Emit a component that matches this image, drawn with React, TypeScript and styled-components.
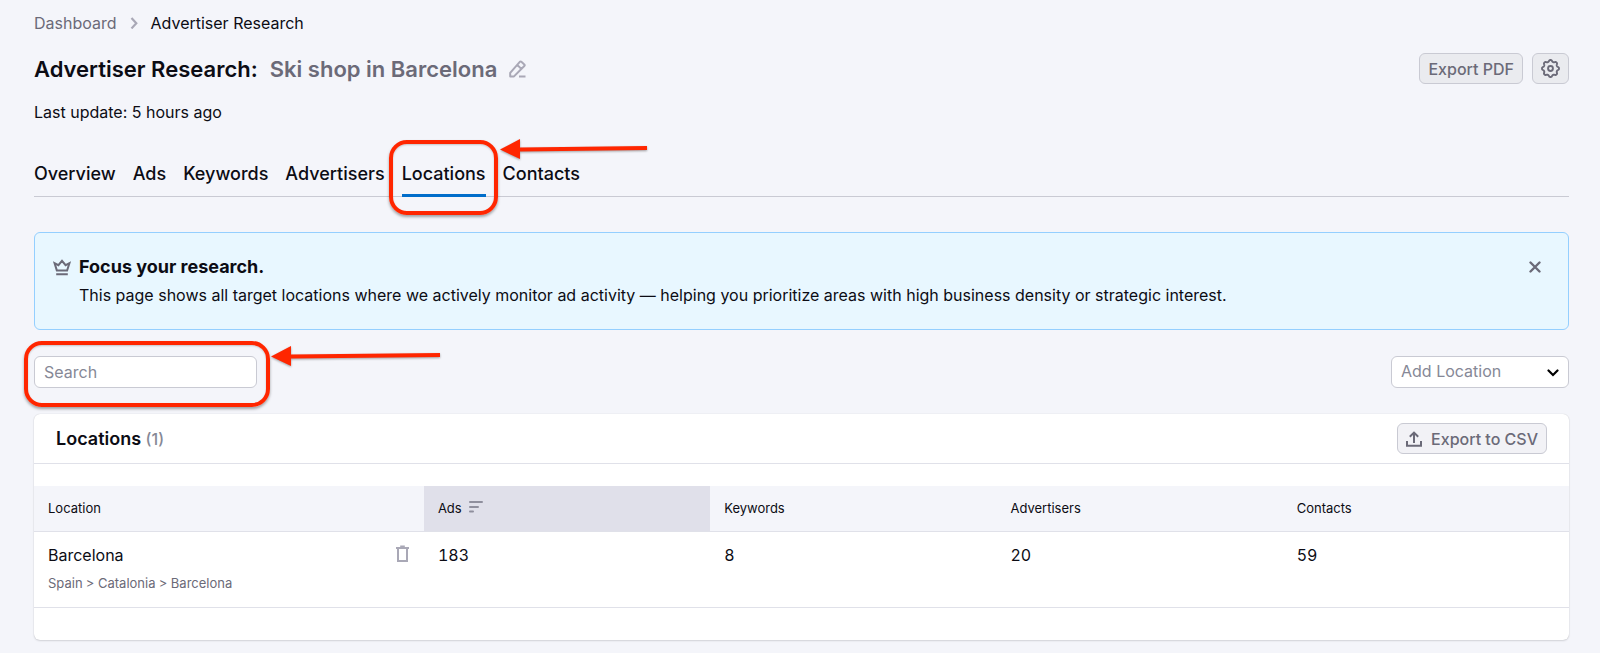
import React from "react";
import styled, { createGlobalStyle } from "styled-components";

const color = {
  page: "#f4f5fa",
  text: "#0c0c14",
  secondary: "#6b6a78",
  muted: "#a9a8b6",
  placeholder: "#868896",
  line: "#e0e1e9",
  control: "#c9cad3",
  accent: "#006dca",
  mark: "#ff2600",
};

const GlobalStyle = createGlobalStyle`
  *, *::before, *::after { box-sizing: border-box; }
  body {
    margin: 0;
    background: ${color.page};
    color: ${color.text};
    font-family: Inter, "Liberation Sans", sans-serif;
    font-size: 16px;
    line-height: 24px;
  }
  button, input, select { font: inherit; }
`;

const Page = styled.main`
  padding: 11px 31px 13px 34px;
`;

const Breadcrumbs = styled.nav`
  display: flex;
  align-items: center;
  gap: 13px;
`;

const Crumb = styled.a<{ $current?: boolean }>`
  color: ${(p) => (p.$current ? color.text : color.secondary)};
  text-decoration: none;
`;

const TitleRow = styled.header`
  display: flex;
  align-items: flex-start;
  justify-content: space-between;
  margin-top: 18px;
`;

const Title = styled.h1`
  display: flex;
  align-items: center;
  gap: 12px;
  margin: 0;
  font-size: 22px;
  line-height: 32px;
  font-weight: 600;
`;

const Subject = styled.span`
  color: ${color.secondary};
`;

const Actions = styled.div`
  display: flex;
  gap: 9px;
`;

const Button = styled.button<{ $onCard?: boolean }>`
  display: flex;
  align-items: center;
  gap: 9px;
  height: 31px;
  padding: 0 8px;
  border: 1px solid ${color.control};
  border-radius: 6px;
  background: ${(p) => (p.$onCard ? "#f2f2f6" : "#eaebef")};
  color: ${color.secondary};
  font-weight: 500;
  white-space: nowrap;
`;

const IconButton = styled.button`
  display: flex;
  padding: 0;
  border: 0;
  background: none;
  color: ${color.muted};
`;

const Updated = styled.p`
  margin: 15px 0 0;
`;

const Tabs = styled.nav`
  display: flex;
  gap: 17px;
  height: 48px;
  margin-top: 25px;
  border-bottom: 1px solid ${color.control};
`;

const TabItem = styled.div`
  position: relative;
`;

const Tab = styled.a<{ $active?: boolean }>`
  display: block;
  height: 48px;
  padding-top: 13px;
  border-bottom: 3px solid ${(p) => (p.$active ? color.accent : "transparent")};
  color: ${color.text};
  font-size: 18px;
  font-weight: 500;
  text-decoration: none;
`;

const Highlight = styled.span<{ $inset: string }>`
  position: absolute;
  inset: ${(p) => p.$inset};
  border: 4px solid ${color.mark};
  border-radius: 18px;
  box-shadow: 0 2px 3px rgba(0, 0, 0, 0.35), inset 0 1px 2px rgba(0, 0, 0, 0.2);
  pointer-events: none;
`;

const Pointer = styled.svg<{ $top: number; $gap: number }>`
  position: absolute;
  z-index: 1;
  top: ${(p) => p.$top}px;
  left: calc(100% + ${(p) => p.$gap}px);
  overflow: visible;
  fill: ${color.mark};
  filter: drop-shadow(0 1px 1px rgba(0, 0, 0, 0.35));
  pointer-events: none;
`;

const Banner = styled.section`
  display: flex;
  align-items: flex-start;
  margin-top: 35px;
  padding: 22px 27px 18px 18px;
  border: 1px solid #94cfff;
  border-radius: 6px;
  background: #e8f7ff;
  color: ${color.secondary};
`;

const BannerBody = styled.div`
  flex: 1;
  margin-left: 8px;
  color: ${color.text};
`;

const BannerIcon = styled.span`
  display: flex;
  align-items: center;
  height: 24px;
`;

const BannerTitle = styled.h2`
  margin: 0;
  font-size: 18px;
  line-height: 24px;
  font-weight: 700;
`;

const BannerText = styled.p`
  margin: 4px 0;
`;

const CloseButton = styled(IconButton)`
  align-items: center;
  height: 24px;
  color: ${color.secondary};
`;

const Toolbar = styled.div`
  display: flex;
  justify-content: space-between;
  margin-top: 26px;
`;

const SearchBox = styled.div`
  position: relative;
  width: 223px;
`;

const SearchInput = styled.input`
  display: block;
  width: 100%;
  height: 32px;
  padding: 0 9px;
  border: 1px solid ${color.control};
  border-radius: 6px;
  background: #fff;
  color: ${color.text};
  &::placeholder {
    color: ${color.placeholder};
    opacity: 1;
  }
`;

const SelectBox = styled.div`
  position: relative;
  width: 178px;
  svg {
    position: absolute;
    right: 10px;
    top: 13px;
    pointer-events: none;
  }
`;

const Select = styled.select`
  appearance: none;
  display: block;
  width: 100%;
  height: 32px;
  padding: 0 30px 2px 9px;
  border: 1px solid ${color.control};
  border-radius: 6px;
  background: #fff;
  color: ${color.placeholder};
`;

const Card = styled.section`
  margin-top: 26px;
  padding-bottom: 32px;
  border-radius: 6px;
  background: #fff;
  box-shadow: 0 0 1px rgba(25, 27, 35, 0.2), 0 1px 2px rgba(25, 27, 35, 0.14);
`;

const CardHeader = styled.div`
  display: flex;
  align-items: center;
  justify-content: space-between;
  height: 50px;
  margin-bottom: 22px;
  padding: 0 22px;
  border-bottom: 1px solid ${color.line};
`;

const CardTitle = styled.h2`
  margin: 0;
  font-size: 18px;
  line-height: 24px;
  font-weight: 600;
`;

const Count = styled.span`
  color: ${color.placeholder};
  font-size: 16px;
  font-weight: 500;
`;

const Table = styled.table`
  width: 100%;
  table-layout: fixed;
  border-collapse: separate;
  border-spacing: 0;
`;

const HeadCell = styled.th<{ $sorted?: boolean; $first?: boolean }>`
  width: ${(p) => (p.$first ? "25.4%" : "auto")};
  height: 46px;
  padding: 0 14px 2px;
  border-bottom: 1px solid ${color.line};
  background: ${(p) => (p.$sorted ? "#e0e0ea" : color.page)};
  font-size: 13px;
  line-height: 20px;
  font-weight: 400;
  text-align: left;
`;

const SortLabel = styled.span`
  display: flex;
  align-items: center;
  gap: 7px;
`;

const Cell = styled.td`
  height: 76px;
  padding: 11px 15px 12px 14px;
  border-bottom: 1px solid ${color.line};
  font-variant-numeric: tabular-nums;
  vertical-align: top;
`;

const Place = styled.div`
  display: flex;
  align-items: flex-start;
  justify-content: space-between;
`;

const Path = styled.div`
  margin-top: 6px;
  color: ${color.secondary};
  font-size: 13px;
  line-height: 20px;
`;

const Arrow = ({ length, top, gap }: { length: number; top: number; gap: number }) => (
  <Pointer $top={top} $gap={gap} width={length} height={20} aria-hidden="true">
    <path d={`M0 10.5 20 0V8.4L${length} 7v4L20 12.4V20Z`} />
  </Pointer>
);

const ChevronRight = () => (
  <svg width="8" height="12" viewBox="0 0 8 12" fill="none" stroke={color.muted} strokeWidth="2.2" aria-hidden="true">
    <path d="M1.5 1 6.3 6.2 1.5 11.4" />
  </svg>
);

const PencilIcon = () => (
  <svg width="17" height="18" viewBox="0 0 17 18" fill="none" stroke="currentColor" strokeWidth="2" strokeLinejoin="round" aria-hidden="true">
    <path d="M1.2 16.4V12.8L10.8 1.8Q11.6 1 12.4 1.8L15.3 4.4Q16.1 5.2 15.3 6L5 16.4ZM8.2 4.9 12.2 8.8M10 16.4H16.5" />
  </svg>
);

const gearPath = (() => {
  const points: string[] = [];
  for (let i = 0; i <= 96; i += 1) {
    const angle = (i / 96) * Math.PI * 2;
    const radius = 7.3 + 0.8 * Math.tanh(1.6 * Math.cos(angle * 8));
    points.push(`${(9 + radius * Math.sin(angle)).toFixed(2)} ${(9 - radius * Math.cos(angle)).toFixed(2)}`);
  }
  return `M${points.join("L")}Z`;
})();

const GearIcon = () => (
  <svg width="19" height="19" viewBox="0 0 18 18" fill="none" stroke="currentColor" strokeWidth="1.8" strokeLinejoin="round" aria-hidden="true">
    <path d={gearPath} />
    <circle cx="9" cy="9" r="2.3" />
  </svg>
);

const CrownIcon = () => (
  <svg width="18" height="18" viewBox="0 0 18 18" fill="none" stroke="currentColor" strokeWidth="2" aria-hidden="true">
    <path d="M3.9 12.6 1.6 5.2 5.4 7.2 9 2.8 12.6 7.2 16.4 5.2 14.1 12.6ZM3.2 16.2H14.8" />
  </svg>
);

const CloseIcon = () => (
  <svg width="12" height="12" viewBox="0 0 12 12" fill="none" stroke="currentColor" strokeWidth="2.4" strokeLinecap="round" aria-hidden="true">
    <path d="M1.5 1.5 10.5 10.5M10.5 1.5 1.5 10.5" />
  </svg>
);

const ChevronDown = () => (
  <svg width="12" height="8" viewBox="0 0 12 8" fill="none" stroke="#000" strokeWidth="2.2" strokeLinecap="round" aria-hidden="true">
    <path d="M1.5 1.5 6 6 10.5 1.5" />
  </svg>
);

const UploadIcon = () => (
  <svg width="16" height="16" viewBox="0 0 16 16" fill="none" stroke="currentColor" strokeWidth="2" aria-hidden="true">
    <path d="M1 10V14.8H15V10M8 12V2M3.8 5.8 8 1.6 12.2 5.8" />
  </svg>
);

const SortIcon = () => (
  <svg width="14" height="14" viewBox="0 0 14 14" fill="none" stroke="#8f8f9d" strokeWidth="2" strokeLinecap="round" aria-hidden="true">
    <path d="M1 1H13M1 6H9M1 10.6H4" />
  </svg>
);

const TrashIcon = () => (
  <svg width="13" height="20" viewBox="0 0 13 20" fill="none" stroke="currentColor" strokeWidth="2" aria-hidden="true">
    <path d="M0 5H13M4.2 3.6H8.8M2 5V18H11V5" />
  </svg>
);

const tabs = ["Overview", "Ads", "Keywords", "Advertisers", "Locations", "Contacts"];
const metrics = ["Ads", "Keywords", "Advertisers", "Contacts"];
const rows = [{ name: "Barcelona", path: "Spain > Catalonia > Barcelona", values: [183, 8, 20, 59] }];

export default function App() {
  return (
    <>
      <GlobalStyle />
      <Page>
        <Breadcrumbs aria-label="Breadcrumb">
          <Crumb href="#dashboard">Dashboard</Crumb>
          <ChevronRight />
          <Crumb href="#research" $current aria-current="page">Advertiser Research</Crumb>
        </Breadcrumbs>

        <TitleRow>
          <Title>
            <span>Advertiser Research:</span>
            <Subject>Ski shop in Barcelona</Subject>
            <IconButton aria-label="Rename"><PencilIcon /></IconButton>
          </Title>
          <Actions>
            <Button>Export PDF</Button>
            <Button aria-label="Settings"><GearIcon /></Button>
          </Actions>
        </TitleRow>
        <Updated>Last update: 5 hours ago</Updated>

        <Tabs aria-label="Sections">
          {tabs.map((tab) => {
            const active = tab === "Locations";
            return (
              <TabItem key={tab}>
                <Tab href={`#${tab.toLowerCase()}`} $active={active} aria-current={active ? "page" : undefined}>
                  {tab}
                </Tab>
                {active && (
                  <>
                    <Highlight $inset="-9px -12px -19px -13px" />
                    <Arrow length={147} top={-10} gap={14} />
                  </>
                )}
              </TabItem>
            );
          })}
        </Tabs>

        <Banner>
          <BannerIcon><CrownIcon /></BannerIcon>
          <BannerBody>
            <BannerTitle>Focus your research.</BannerTitle>
            <BannerText>
              This page shows all target locations where we actively monitor ad activity — helping you prioritize areas
              with high business density or strategic interest.
            </BannerText>
          </BannerBody>
          <CloseButton aria-label="Close"><CloseIcon /></CloseButton>
        </Banner>

        <Toolbar>
          <SearchBox>
            <SearchInput type="search" placeholder="Search" aria-label="Search" />
            <Highlight $inset="-15px -13px -19px -10px" />
            <Arrow length={169} top={-10} gap={14} />
          </SearchBox>
          <SelectBox>
            <Select aria-label="Add Location" defaultValue="">
              <option value="">Add Location</option>
            </Select>
            <ChevronDown />
          </SelectBox>
        </Toolbar>

        <Card>
          <CardHeader>
            <CardTitle>Locations <Count>(1)</Count></CardTitle>
            <Button $onCard><UploadIcon />Export to CSV</Button>
          </CardHeader>
          <Table>
            <thead>
              <tr>
                <HeadCell scope="col" $first>Location</HeadCell>
                {metrics.map((metric) => {
                  const sorted = metric === "Ads";
                  return (
                    <HeadCell key={metric} scope="col" $sorted={sorted} aria-sort={sorted ? "descending" : undefined}>
                      <SortLabel>{metric}{sorted && <SortIcon />}</SortLabel>
                    </HeadCell>
                  );
                })}
              </tr>
            </thead>
            <tbody>
              {rows.map((row) => (
                <tr key={row.name}>
                  <Cell>
                    <Place>
                      {row.name}
                      <IconButton aria-label={`Delete ${row.name}`}><TrashIcon /></IconButton>
                    </Place>
                    <Path>{row.path}</Path>
                  </Cell>
                  {row.values.map((value, i) => <Cell key={metrics[i]}>{value}</Cell>)}
                </tr>
              ))}
            </tbody>
          </Table>
        </Card>
      </Page>
    </>
  );
}
